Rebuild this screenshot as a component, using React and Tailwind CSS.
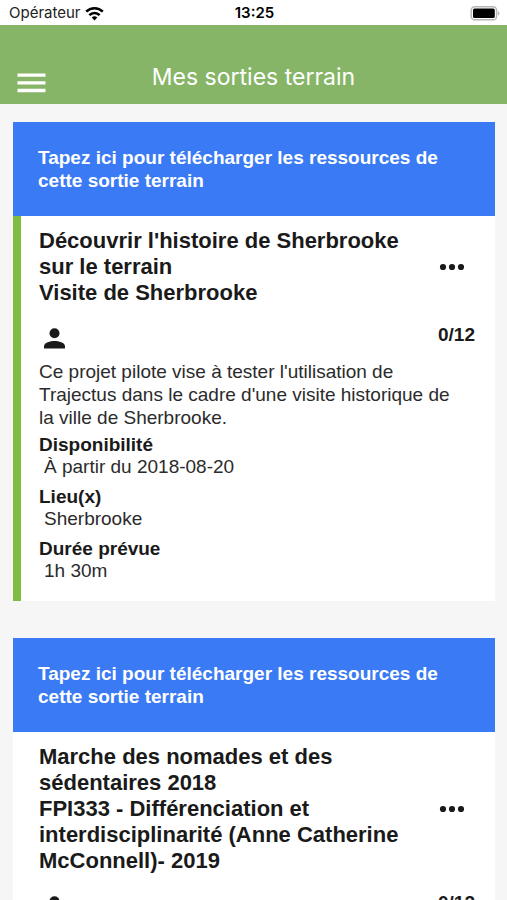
import React from 'react';

const outings = [
  {
    id: 1,
    title: "Découvrir l'histoire de Sherbrooke sur le terrain",
    group: 'Visite de Sherbrooke',
    count: '0/12',
    active: true,
    description:
      "Ce projet pilote vise à tester l'utilisation de Trajectus dans le cadre d'une visite historique de la ville de Sherbrooke.",
    details: [
      { label: 'Disponibilité', value: 'À partir du 2018-08-20' },
      { label: 'Lieu(x)', value: 'Sherbrooke' },
      { label: 'Durée prévue', value: '1h 30m' },
    ],
  },
  {
    id: 2,
    title: 'Marche des nomades et des sédentaires 2018',
    group: 'FPI333 - Différenciation et interdisciplinarité (Anne Catherine McConnell)- 2019',
    count: '0/12',
    active: false,
    description: '',
    details: [],
  },
];

function WifiIcon() {
  return (
    <svg width="19" height="15" viewBox="0 0 20 15" fill="none" stroke="#000" strokeWidth="2.7" aria-hidden="true">
      <path d="M1.3 5.6a12.3 12.3 0 0 1 17.4 0" />
      <path d="M4.6 9.2a7.6 7.6 0 0 1 10.8 0" />
      <path d="M10 14.8l-2.9-3a4.1 4.1 0 0 1 5.8 0z" fill="#000" stroke="none" />
    </svg>
  );
}

function BatteryIcon() {
  return (
    <svg width="31" height="15" viewBox="0 0 31 15" aria-hidden="true">
      <rect x="2.2" y="0.8" width="25.4" height="13" rx="3.6" fill="#fff" stroke="#b5b5b5" strokeWidth="1.5" />
      <rect x="4" y="2.6" width="21.8" height="9.4" rx="1.6" fill="#000" />
      <path d="M29 5.2c2 .6 2 3.8 0 4.4z" fill="#b5b5b5" />
    </svg>
  );
}

function StatusBar() {
  return (
    <div className="grid grid-cols-3 items-center h-[25px] pl-[9px] pr-[7px] pt-[2px] bg-white text-black">
      <div className="flex items-center gap-1 text-[15px] text-[#222]">
        Opérateur <WifiIcon />
      </div>
      <div className="text-center text-[15px] font-semibold">13:25</div>
      <div className="flex justify-end">
        <BatteryIcon />
      </div>
    </div>
  );
}

function OutingCard({ outing }) {
  return (
    <article>
      <button type="button" className="block w-full px-[25px] py-6 bg-[#3a7af5] text-left text-white text-[19px] leading-[23px] font-bold">
        Tapez ici pour télécharger les ressources de cette sortie terrain
      </button>

      <div className={`bg-white border-l-8 pl-[18px] pr-5 pt-3 pb-[19px] ${outing.active ? 'border-[#80bc42]' : 'border-white'}`}>
        <div className="flex items-center justify-between">
          <h2 className="w-[86%] text-[22px] leading-[26px] font-bold">
            {outing.title}
            <br />
            {outing.group}
          </h2>
          <button type="button" aria-label="Options" className="mr-[10px]">
            <svg width="26" height="8" viewBox="0 0 26 8" fill="currentColor" aria-hidden="true">
              <circle cx="4" cy="4" r="3.1" />
              <circle cx="13" cy="4" r="3.1" />
              <circle cx="22" cy="4" r="3.1" />
            </svg>
          </button>
        </div>

        <div className="flex justify-between pt-[18px] h-[54px]">
          <svg className="ml-[5px] mt-1" width="21" height="21" viewBox="0 0 21 21" fill="currentColor" aria-hidden="true">
            <circle cx="10.5" cy="5.3" r="5" />
            <path d="M0 20.6v-2.4c0-3.6 6.4-5.2 10.5-5.2S21 14.6 21 18.2v2.4z" />
          </svg>
          <span className="text-[19px] leading-[22px] font-bold">{outing.count}</span>
        </div>

        {outing.description && (
          <p className="pr-3 text-[19px] leading-[23px] text-[#2b2b2b]">{outing.description}</p>
        )}

        <dl className="flex flex-col gap-2 mt-[5px] text-[19px] leading-[22px]">
          {outing.details.map((d) => (
            <div key={d.label}>
              <dt className="font-bold">{d.label}</dt>
              <dd className="pl-[5px] text-[#2b2b2b]">{d.value}</dd>
            </div>
          ))}
        </dl>
      </div>
    </article>
  );
}

export default function App() {
  return (
    <div className="h-screen overflow-hidden flex flex-col bg-[#f6f6f6] text-[#1a1a1a] font-['Liberation_Sans',Arial,sans-serif]">
      <div className="font-[Inter,sans-serif]">
        <StatusBar />
        <header className="grid grid-cols-[1fr_auto_1fr] items-end h-[79px] px-[17px] pb-[11px] bg-[#86b567] text-white">
          <button type="button" aria-label="Menu" className="w-7">
            <svg width="29" height="20" viewBox="0 0 29 20" stroke="#fff" strokeWidth="3.3" aria-hidden="true">
              <path d="M.5 2.2h28M.5 9.9h28M.5 17.5h28" />
            </svg>
          </button>
          <h1 className="text-[23px] leading-8 font-normal">Mes sorties terrain</h1>
        </header>
      </div>

      <main className="flex-1 min-h-0 overflow-hidden flex flex-col gap-[37px] pl-[13px] pr-3 pt-[18px]">
        {outings.map((outing) => (
          <OutingCard key={outing.id} outing={outing} />
        ))}
      </main>
    </div>
  );
}
